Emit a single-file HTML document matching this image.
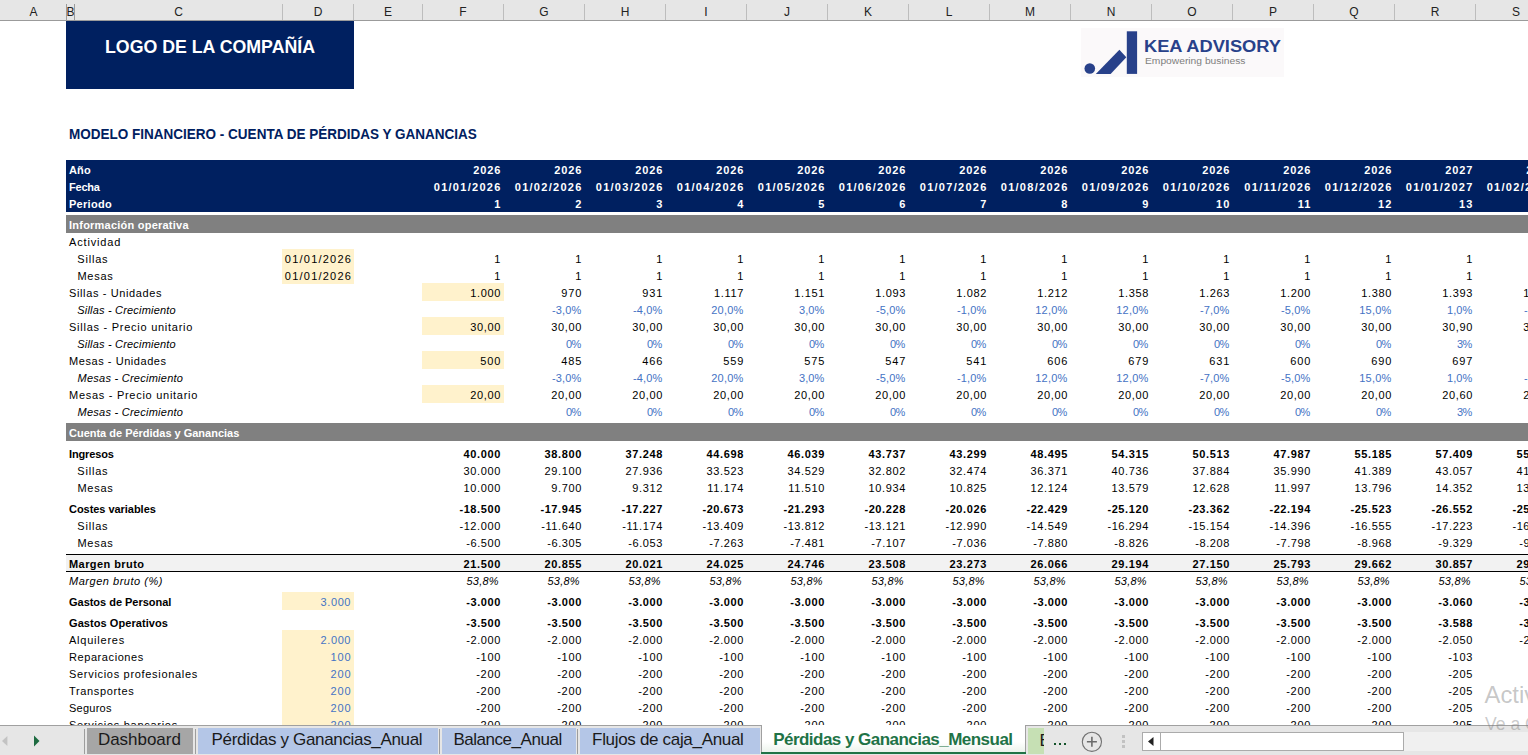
<!DOCTYPE html>
<html><head><meta charset="utf-8"><title>Modelo Financiero</title>
<style>
html,body{margin:0;padding:0;}
body{width:1528px;height:755px;overflow:hidden;background:#fff;position:relative;font-family:"Liberation Sans",sans-serif;}
.t{position:absolute;white-space:nowrap;}
.r{position:absolute;}
.ch{text-align:center;font-size:12px;line-height:18px;color:#222;}
#sheet{position:absolute;left:0;top:0;width:1528px;height:725px;overflow:hidden;}
</style></head><body>
<div id="sheet">
<div class="r" style="left:66px;top:21px;width:288px;height:68px;background:#002060;"></div>
<div class="t" style="top:21px;line-height:52px;font-size:18px;color:#fff;font-weight:bold;left:105.2px;transform:scaleX(0.986);transform-origin:0 0;">LOGO DE LA COMPAÑÍA</div>
<div class="t" style="top:121px;line-height:26px;font-size:14px;color:#002060;font-weight:bold;left:69px;transform:scaleX(0.965);transform-origin:0 0;">MODELO FINANCIERO - CUENTA DE PÉRDIDAS Y GANANCIAS</div>
<div class="r" style="left:66px;top:160px;width:1462px;height:52px;background:#002060;"></div>
<div class="r" style="left:66px;top:215px;width:1462px;height:18px;background:#808080;"></div>
<div class="r" style="left:66px;top:423px;width:1462px;height:18px;background:#808080;"></div>
<div class="t" style="top:162px;line-height:17px;font-size:11px;color:#fff;font-weight:bold;letter-spacing:0.11px;left:69px;">Año</div>
<div class="t" style="top:162px;line-height:17px;font-size:11px;color:#fff;font-weight:bold;letter-spacing:0.84px;right:1026.86px;">2026</div>
<div class="t" style="top:162px;line-height:17px;font-size:11px;color:#fff;font-weight:bold;letter-spacing:0.84px;right:945.86px;">2026</div>
<div class="t" style="top:162px;line-height:17px;font-size:11px;color:#fff;font-weight:bold;letter-spacing:0.84px;right:864.86px;">2026</div>
<div class="t" style="top:162px;line-height:17px;font-size:11px;color:#fff;font-weight:bold;letter-spacing:0.84px;right:783.86px;">2026</div>
<div class="t" style="top:162px;line-height:17px;font-size:11px;color:#fff;font-weight:bold;letter-spacing:0.84px;right:702.86px;">2026</div>
<div class="t" style="top:162px;line-height:17px;font-size:11px;color:#fff;font-weight:bold;letter-spacing:0.84px;right:621.86px;">2026</div>
<div class="t" style="top:162px;line-height:17px;font-size:11px;color:#fff;font-weight:bold;letter-spacing:0.84px;right:540.86px;">2026</div>
<div class="t" style="top:162px;line-height:17px;font-size:11px;color:#fff;font-weight:bold;letter-spacing:0.84px;right:459.86px;">2026</div>
<div class="t" style="top:162px;line-height:17px;font-size:11px;color:#fff;font-weight:bold;letter-spacing:0.84px;right:378.86px;">2026</div>
<div class="t" style="top:162px;line-height:17px;font-size:11px;color:#fff;font-weight:bold;letter-spacing:0.84px;right:297.86px;">2026</div>
<div class="t" style="top:162px;line-height:17px;font-size:11px;color:#fff;font-weight:bold;letter-spacing:0.84px;right:216.86px;">2026</div>
<div class="t" style="top:162px;line-height:17px;font-size:11px;color:#fff;font-weight:bold;letter-spacing:0.84px;right:135.86px;">2026</div>
<div class="t" style="top:162px;line-height:17px;font-size:11px;color:#fff;font-weight:bold;letter-spacing:0.84px;right:54.86px;">2027</div>
<div class="t" style="top:162px;line-height:17px;font-size:11px;color:#fff;font-weight:bold;letter-spacing:0.84px;right:-26.14px;">2027</div>
<div class="t" style="top:179px;line-height:17px;font-size:11px;color:#fff;font-weight:bold;letter-spacing:-0.22px;left:69px;">Fecha</div>
<div class="t" style="top:179px;line-height:17px;font-size:11px;color:#fff;font-weight:bold;letter-spacing:1.28px;right:1026.42px;">01/01/2026</div>
<div class="t" style="top:179px;line-height:17px;font-size:11px;color:#fff;font-weight:bold;letter-spacing:1.28px;right:945.42px;">01/02/2026</div>
<div class="t" style="top:179px;line-height:17px;font-size:11px;color:#fff;font-weight:bold;letter-spacing:1.28px;right:864.42px;">01/03/2026</div>
<div class="t" style="top:179px;line-height:17px;font-size:11px;color:#fff;font-weight:bold;letter-spacing:1.28px;right:783.42px;">01/04/2026</div>
<div class="t" style="top:179px;line-height:17px;font-size:11px;color:#fff;font-weight:bold;letter-spacing:1.28px;right:702.42px;">01/05/2026</div>
<div class="t" style="top:179px;line-height:17px;font-size:11px;color:#fff;font-weight:bold;letter-spacing:1.28px;right:621.42px;">01/06/2026</div>
<div class="t" style="top:179px;line-height:17px;font-size:11px;color:#fff;font-weight:bold;letter-spacing:1.28px;right:540.42px;">01/07/2026</div>
<div class="t" style="top:179px;line-height:17px;font-size:11px;color:#fff;font-weight:bold;letter-spacing:1.28px;right:459.42px;">01/08/2026</div>
<div class="t" style="top:179px;line-height:17px;font-size:11px;color:#fff;font-weight:bold;letter-spacing:1.28px;right:378.42px;">01/09/2026</div>
<div class="t" style="top:179px;line-height:17px;font-size:11px;color:#fff;font-weight:bold;letter-spacing:1.28px;right:297.42px;">01/10/2026</div>
<div class="t" style="top:179px;line-height:17px;font-size:11px;color:#fff;font-weight:bold;letter-spacing:1.28px;right:216.42px;">01/11/2026</div>
<div class="t" style="top:179px;line-height:17px;font-size:11px;color:#fff;font-weight:bold;letter-spacing:1.28px;right:135.42px;">01/12/2026</div>
<div class="t" style="top:179px;line-height:17px;font-size:11px;color:#fff;font-weight:bold;letter-spacing:1.28px;right:54.42px;">01/01/2027</div>
<div class="t" style="top:179px;line-height:17px;font-size:11px;color:#fff;font-weight:bold;letter-spacing:1.28px;right:-26.58px;">01/02/2027</div>
<div class="t" style="top:196px;line-height:17px;font-size:11px;color:#fff;font-weight:bold;letter-spacing:0.28px;left:69px;">Periodo</div>
<div class="t" style="top:196px;line-height:17px;font-size:11px;color:#fff;font-weight:bold;right:1027.70px;">1</div>
<div class="t" style="top:196px;line-height:17px;font-size:11px;color:#fff;font-weight:bold;right:946.70px;">2</div>
<div class="t" style="top:196px;line-height:17px;font-size:11px;color:#fff;font-weight:bold;right:865.70px;">3</div>
<div class="t" style="top:196px;line-height:17px;font-size:11px;color:#fff;font-weight:bold;right:784.70px;">4</div>
<div class="t" style="top:196px;line-height:17px;font-size:11px;color:#fff;font-weight:bold;right:703.70px;">5</div>
<div class="t" style="top:196px;line-height:17px;font-size:11px;color:#fff;font-weight:bold;right:622.70px;">6</div>
<div class="t" style="top:196px;line-height:17px;font-size:11px;color:#fff;font-weight:bold;right:541.70px;">7</div>
<div class="t" style="top:196px;line-height:17px;font-size:11px;color:#fff;font-weight:bold;right:460.70px;">8</div>
<div class="t" style="top:196px;line-height:17px;font-size:11px;color:#fff;font-weight:bold;right:379.70px;">9</div>
<div class="t" style="top:196px;line-height:17px;font-size:11px;color:#fff;font-weight:bold;letter-spacing:0.96px;right:297.74px;">10</div>
<div class="t" style="top:196px;line-height:17px;font-size:11px;color:#fff;font-weight:bold;letter-spacing:0.96px;right:216.74px;">11</div>
<div class="t" style="top:196px;line-height:17px;font-size:11px;color:#fff;font-weight:bold;letter-spacing:0.96px;right:135.74px;">12</div>
<div class="t" style="top:196px;line-height:17px;font-size:11px;color:#fff;font-weight:bold;letter-spacing:0.96px;right:54.74px;">13</div>
<div class="t" style="top:196px;line-height:17px;font-size:11px;color:#fff;font-weight:bold;letter-spacing:0.96px;right:-26.26px;">14</div>
<div class="t" style="top:216.5px;line-height:17px;font-size:11px;color:#fff;font-weight:bold;letter-spacing:0.23px;left:69px;">Información operativa</div>
<div class="t" style="top:424.5px;line-height:17px;font-size:11px;color:#fff;font-weight:bold;letter-spacing:-0.01px;left:69px;">Cuenta de Pérdidas y Ganancias</div>
<div class="r" style="left:282px;top:249px;width:72px;height:35px;background:#FFF2CC;"></div>
<div class="r" style="left:422px;top:283px;width:82px;height:18px;background:#FFF2CC;"></div>
<div class="r" style="left:422px;top:317px;width:82px;height:18px;background:#FFF2CC;"></div>
<div class="r" style="left:422px;top:351px;width:82px;height:18px;background:#FFF2CC;"></div>
<div class="r" style="left:422px;top:385px;width:82px;height:18px;background:#FFF2CC;"></div>
<div class="r" style="left:282px;top:592px;width:72px;height:18px;background:#FFF2CC;"></div>
<div class="r" style="left:282px;top:630px;width:72px;height:100px;background:#FFF2CC;"></div>
<div class="t" style="top:234px;line-height:17px;font-size:11px;color:#000;letter-spacing:0.83px;left:69px;">Actividad</div>
<div class="t" style="top:251px;line-height:17px;font-size:11px;color:#000;letter-spacing:0.80px;left:77.3px;">Sillas</div>
<div class="t" style="top:251px;line-height:17px;font-size:11px;color:#000;right:1027.70px;">1</div>
<div class="t" style="top:251px;line-height:17px;font-size:11px;color:#000;right:946.70px;">1</div>
<div class="t" style="top:251px;line-height:17px;font-size:11px;color:#000;right:865.70px;">1</div>
<div class="t" style="top:251px;line-height:17px;font-size:11px;color:#000;right:784.70px;">1</div>
<div class="t" style="top:251px;line-height:17px;font-size:11px;color:#000;right:703.70px;">1</div>
<div class="t" style="top:251px;line-height:17px;font-size:11px;color:#000;right:622.70px;">1</div>
<div class="t" style="top:251px;line-height:17px;font-size:11px;color:#000;right:541.70px;">1</div>
<div class="t" style="top:251px;line-height:17px;font-size:11px;color:#000;right:460.70px;">1</div>
<div class="t" style="top:251px;line-height:17px;font-size:11px;color:#000;right:379.70px;">1</div>
<div class="t" style="top:251px;line-height:17px;font-size:11px;color:#000;right:298.70px;">1</div>
<div class="t" style="top:251px;line-height:17px;font-size:11px;color:#000;right:217.70px;">1</div>
<div class="t" style="top:251px;line-height:17px;font-size:11px;color:#000;right:136.70px;">1</div>
<div class="t" style="top:251px;line-height:17px;font-size:11px;color:#000;right:55.70px;">1</div>
<div class="t" style="top:251px;line-height:17px;font-size:11px;color:#000;right:-25.30px;">1</div>
<div class="t" style="top:268px;line-height:17px;font-size:11px;color:#000;letter-spacing:0.70px;left:77.5px;">Mesas</div>
<div class="t" style="top:268px;line-height:17px;font-size:11px;color:#000;right:1027.70px;">1</div>
<div class="t" style="top:268px;line-height:17px;font-size:11px;color:#000;right:946.70px;">1</div>
<div class="t" style="top:268px;line-height:17px;font-size:11px;color:#000;right:865.70px;">1</div>
<div class="t" style="top:268px;line-height:17px;font-size:11px;color:#000;right:784.70px;">1</div>
<div class="t" style="top:268px;line-height:17px;font-size:11px;color:#000;right:703.70px;">1</div>
<div class="t" style="top:268px;line-height:17px;font-size:11px;color:#000;right:622.70px;">1</div>
<div class="t" style="top:268px;line-height:17px;font-size:11px;color:#000;right:541.70px;">1</div>
<div class="t" style="top:268px;line-height:17px;font-size:11px;color:#000;right:460.70px;">1</div>
<div class="t" style="top:268px;line-height:17px;font-size:11px;color:#000;right:379.70px;">1</div>
<div class="t" style="top:268px;line-height:17px;font-size:11px;color:#000;right:298.70px;">1</div>
<div class="t" style="top:268px;line-height:17px;font-size:11px;color:#000;right:217.70px;">1</div>
<div class="t" style="top:268px;line-height:17px;font-size:11px;color:#000;right:136.70px;">1</div>
<div class="t" style="top:268px;line-height:17px;font-size:11px;color:#000;right:55.70px;">1</div>
<div class="t" style="top:268px;line-height:17px;font-size:11px;color:#000;right:-25.30px;">1</div>
<div class="t" style="top:251px;line-height:17px;font-size:11px;color:#000;letter-spacing:1.22px;right:1175.88px;">01/01/2026</div>
<div class="t" style="top:268px;line-height:17px;font-size:11px;color:#000;letter-spacing:1.22px;right:1175.88px;">01/01/2026</div>
<div class="t" style="top:285px;line-height:17px;font-size:11px;color:#000;letter-spacing:0.62px;left:69px;">Sillas - Unidades</div>
<div class="t" style="top:285px;line-height:17px;font-size:11px;color:#000;letter-spacing:0.62px;right:1027.08px;">1.000</div>
<div class="t" style="top:285px;line-height:17px;font-size:11px;color:#000;letter-spacing:0.87px;right:945.83px;">970</div>
<div class="t" style="top:285px;line-height:17px;font-size:11px;color:#000;letter-spacing:0.87px;right:864.83px;">931</div>
<div class="t" style="top:285px;line-height:17px;font-size:11px;color:#000;letter-spacing:0.62px;right:784.08px;">1.117</div>
<div class="t" style="top:285px;line-height:17px;font-size:11px;color:#000;letter-spacing:0.62px;right:703.08px;">1.151</div>
<div class="t" style="top:285px;line-height:17px;font-size:11px;color:#000;letter-spacing:0.62px;right:622.08px;">1.093</div>
<div class="t" style="top:285px;line-height:17px;font-size:11px;color:#000;letter-spacing:0.62px;right:541.08px;">1.082</div>
<div class="t" style="top:285px;line-height:17px;font-size:11px;color:#000;letter-spacing:0.62px;right:460.08px;">1.212</div>
<div class="t" style="top:285px;line-height:17px;font-size:11px;color:#000;letter-spacing:0.62px;right:379.08px;">1.358</div>
<div class="t" style="top:285px;line-height:17px;font-size:11px;color:#000;letter-spacing:0.62px;right:298.08px;">1.263</div>
<div class="t" style="top:285px;line-height:17px;font-size:11px;color:#000;letter-spacing:0.62px;right:217.08px;">1.200</div>
<div class="t" style="top:285px;line-height:17px;font-size:11px;color:#000;letter-spacing:0.62px;right:136.08px;">1.380</div>
<div class="t" style="top:285px;line-height:17px;font-size:11px;color:#000;letter-spacing:0.62px;right:55.08px;">1.393</div>
<div class="t" style="top:285px;line-height:17px;font-size:11px;color:#000;letter-spacing:0.62px;right:-25.92px;">1.351</div>
<div class="t" style="top:302px;line-height:17px;font-size:11px;color:#000;font-style:italic;letter-spacing:0.19px;left:77.3px;">Sillas - Crecimiento</div>
<div class="t" style="top:302px;line-height:17px;font-size:11px;color:#4472C4;letter-spacing:0.12px;right:946.58px;">-3,0%</div>
<div class="t" style="top:302px;line-height:17px;font-size:11px;color:#4472C4;letter-spacing:0.12px;right:865.58px;">-4,0%</div>
<div class="t" style="top:302px;line-height:17px;font-size:11px;color:#4472C4;letter-spacing:0.23px;right:784.47px;">20,0%</div>
<div class="t" style="top:302px;line-height:17px;font-size:11px;color:#4472C4;letter-spacing:0.04px;right:703.66px;">3,0%</div>
<div class="t" style="top:302px;line-height:17px;font-size:11px;color:#4472C4;letter-spacing:0.12px;right:622.58px;">-5,0%</div>
<div class="t" style="top:302px;line-height:17px;font-size:11px;color:#4472C4;letter-spacing:0.12px;right:541.58px;">-1,0%</div>
<div class="t" style="top:302px;line-height:17px;font-size:11px;color:#4472C4;letter-spacing:0.23px;right:460.47px;">12,0%</div>
<div class="t" style="top:302px;line-height:17px;font-size:11px;color:#4472C4;letter-spacing:0.23px;right:379.47px;">12,0%</div>
<div class="t" style="top:302px;line-height:17px;font-size:11px;color:#4472C4;letter-spacing:0.12px;right:298.58px;">-7,0%</div>
<div class="t" style="top:302px;line-height:17px;font-size:11px;color:#4472C4;letter-spacing:0.12px;right:217.58px;">-5,0%</div>
<div class="t" style="top:302px;line-height:17px;font-size:11px;color:#4472C4;letter-spacing:0.23px;right:136.47px;">15,0%</div>
<div class="t" style="top:302px;line-height:17px;font-size:11px;color:#4472C4;letter-spacing:0.04px;right:55.66px;">1,0%</div>
<div class="t" style="top:302px;line-height:17px;font-size:11px;color:#4472C4;letter-spacing:0.12px;right:-25.42px;">-3,0%</div>
<div class="t" style="top:319px;line-height:17px;font-size:11px;color:#000;letter-spacing:0.74px;left:69px;">Sillas - Precio unitario</div>
<div class="t" style="top:319px;line-height:17px;font-size:11px;color:#000;letter-spacing:0.62px;right:1027.08px;">30,00</div>
<div class="t" style="top:319px;line-height:17px;font-size:11px;color:#000;letter-spacing:0.62px;right:946.08px;">30,00</div>
<div class="t" style="top:319px;line-height:17px;font-size:11px;color:#000;letter-spacing:0.62px;right:865.08px;">30,00</div>
<div class="t" style="top:319px;line-height:17px;font-size:11px;color:#000;letter-spacing:0.62px;right:784.08px;">30,00</div>
<div class="t" style="top:319px;line-height:17px;font-size:11px;color:#000;letter-spacing:0.62px;right:703.08px;">30,00</div>
<div class="t" style="top:319px;line-height:17px;font-size:11px;color:#000;letter-spacing:0.62px;right:622.08px;">30,00</div>
<div class="t" style="top:319px;line-height:17px;font-size:11px;color:#000;letter-spacing:0.62px;right:541.08px;">30,00</div>
<div class="t" style="top:319px;line-height:17px;font-size:11px;color:#000;letter-spacing:0.62px;right:460.08px;">30,00</div>
<div class="t" style="top:319px;line-height:17px;font-size:11px;color:#000;letter-spacing:0.62px;right:379.08px;">30,00</div>
<div class="t" style="top:319px;line-height:17px;font-size:11px;color:#000;letter-spacing:0.62px;right:298.08px;">30,00</div>
<div class="t" style="top:319px;line-height:17px;font-size:11px;color:#000;letter-spacing:0.62px;right:217.08px;">30,00</div>
<div class="t" style="top:319px;line-height:17px;font-size:11px;color:#000;letter-spacing:0.62px;right:136.08px;">30,00</div>
<div class="t" style="top:319px;line-height:17px;font-size:11px;color:#000;letter-spacing:0.62px;right:55.08px;">30,90</div>
<div class="t" style="top:319px;line-height:17px;font-size:11px;color:#000;letter-spacing:0.62px;right:-25.92px;">30,90</div>
<div class="t" style="top:336px;line-height:17px;font-size:11px;color:#000;font-style:italic;letter-spacing:0.19px;left:77.3px;">Sillas - Crecimiento</div>
<div class="t" style="top:336px;line-height:17px;font-size:11px;color:#4472C4;letter-spacing:-0.60px;right:947.30px;">0%</div>
<div class="t" style="top:336px;line-height:17px;font-size:11px;color:#4472C4;letter-spacing:-0.60px;right:866.30px;">0%</div>
<div class="t" style="top:336px;line-height:17px;font-size:11px;color:#4472C4;letter-spacing:-0.60px;right:785.30px;">0%</div>
<div class="t" style="top:336px;line-height:17px;font-size:11px;color:#4472C4;letter-spacing:-0.60px;right:704.30px;">0%</div>
<div class="t" style="top:336px;line-height:17px;font-size:11px;color:#4472C4;letter-spacing:-0.60px;right:623.30px;">0%</div>
<div class="t" style="top:336px;line-height:17px;font-size:11px;color:#4472C4;letter-spacing:-0.60px;right:542.30px;">0%</div>
<div class="t" style="top:336px;line-height:17px;font-size:11px;color:#4472C4;letter-spacing:-0.60px;right:461.30px;">0%</div>
<div class="t" style="top:336px;line-height:17px;font-size:11px;color:#4472C4;letter-spacing:-0.60px;right:380.30px;">0%</div>
<div class="t" style="top:336px;line-height:17px;font-size:11px;color:#4472C4;letter-spacing:-0.60px;right:299.30px;">0%</div>
<div class="t" style="top:336px;line-height:17px;font-size:11px;color:#4472C4;letter-spacing:-0.60px;right:218.30px;">0%</div>
<div class="t" style="top:336px;line-height:17px;font-size:11px;color:#4472C4;letter-spacing:-0.60px;right:137.30px;">0%</div>
<div class="t" style="top:336px;line-height:17px;font-size:11px;color:#4472C4;letter-spacing:-0.60px;right:56.30px;">3%</div>
<div class="t" style="top:336px;line-height:17px;font-size:11px;color:#4472C4;letter-spacing:-0.60px;right:-24.70px;">0%</div>
<div class="t" style="top:353px;line-height:17px;font-size:11px;color:#000;letter-spacing:0.56px;left:69px;">Mesas - Unidades</div>
<div class="t" style="top:353px;line-height:17px;font-size:11px;color:#000;letter-spacing:0.87px;right:1026.83px;">500</div>
<div class="t" style="top:353px;line-height:17px;font-size:11px;color:#000;letter-spacing:0.87px;right:945.83px;">485</div>
<div class="t" style="top:353px;line-height:17px;font-size:11px;color:#000;letter-spacing:0.87px;right:864.83px;">466</div>
<div class="t" style="top:353px;line-height:17px;font-size:11px;color:#000;letter-spacing:0.87px;right:783.83px;">559</div>
<div class="t" style="top:353px;line-height:17px;font-size:11px;color:#000;letter-spacing:0.87px;right:702.83px;">575</div>
<div class="t" style="top:353px;line-height:17px;font-size:11px;color:#000;letter-spacing:0.87px;right:621.83px;">547</div>
<div class="t" style="top:353px;line-height:17px;font-size:11px;color:#000;letter-spacing:0.87px;right:540.83px;">541</div>
<div class="t" style="top:353px;line-height:17px;font-size:11px;color:#000;letter-spacing:0.87px;right:459.83px;">606</div>
<div class="t" style="top:353px;line-height:17px;font-size:11px;color:#000;letter-spacing:0.87px;right:378.83px;">679</div>
<div class="t" style="top:353px;line-height:17px;font-size:11px;color:#000;letter-spacing:0.87px;right:297.83px;">631</div>
<div class="t" style="top:353px;line-height:17px;font-size:11px;color:#000;letter-spacing:0.87px;right:216.83px;">600</div>
<div class="t" style="top:353px;line-height:17px;font-size:11px;color:#000;letter-spacing:0.87px;right:135.83px;">690</div>
<div class="t" style="top:353px;line-height:17px;font-size:11px;color:#000;letter-spacing:0.87px;right:54.83px;">697</div>
<div class="t" style="top:353px;line-height:17px;font-size:11px;color:#000;letter-spacing:0.87px;right:-26.17px;">676</div>
<div class="t" style="top:370px;line-height:17px;font-size:11px;color:#000;font-style:italic;letter-spacing:0.25px;left:77.6px;">Mesas - Crecimiento</div>
<div class="t" style="top:370px;line-height:17px;font-size:11px;color:#4472C4;letter-spacing:0.12px;right:946.58px;">-3,0%</div>
<div class="t" style="top:370px;line-height:17px;font-size:11px;color:#4472C4;letter-spacing:0.12px;right:865.58px;">-4,0%</div>
<div class="t" style="top:370px;line-height:17px;font-size:11px;color:#4472C4;letter-spacing:0.23px;right:784.47px;">20,0%</div>
<div class="t" style="top:370px;line-height:17px;font-size:11px;color:#4472C4;letter-spacing:0.04px;right:703.66px;">3,0%</div>
<div class="t" style="top:370px;line-height:17px;font-size:11px;color:#4472C4;letter-spacing:0.12px;right:622.58px;">-5,0%</div>
<div class="t" style="top:370px;line-height:17px;font-size:11px;color:#4472C4;letter-spacing:0.12px;right:541.58px;">-1,0%</div>
<div class="t" style="top:370px;line-height:17px;font-size:11px;color:#4472C4;letter-spacing:0.23px;right:460.47px;">12,0%</div>
<div class="t" style="top:370px;line-height:17px;font-size:11px;color:#4472C4;letter-spacing:0.23px;right:379.47px;">12,0%</div>
<div class="t" style="top:370px;line-height:17px;font-size:11px;color:#4472C4;letter-spacing:0.12px;right:298.58px;">-7,0%</div>
<div class="t" style="top:370px;line-height:17px;font-size:11px;color:#4472C4;letter-spacing:0.12px;right:217.58px;">-5,0%</div>
<div class="t" style="top:370px;line-height:17px;font-size:11px;color:#4472C4;letter-spacing:0.23px;right:136.47px;">15,0%</div>
<div class="t" style="top:370px;line-height:17px;font-size:11px;color:#4472C4;letter-spacing:0.04px;right:55.66px;">1,0%</div>
<div class="t" style="top:370px;line-height:17px;font-size:11px;color:#4472C4;letter-spacing:0.12px;right:-25.42px;">-3,0%</div>
<div class="t" style="top:387px;line-height:17px;font-size:11px;color:#000;letter-spacing:0.72px;left:69px;">Mesas - Precio unitario</div>
<div class="t" style="top:387px;line-height:17px;font-size:11px;color:#000;letter-spacing:0.62px;right:1027.08px;">20,00</div>
<div class="t" style="top:387px;line-height:17px;font-size:11px;color:#000;letter-spacing:0.62px;right:946.08px;">20,00</div>
<div class="t" style="top:387px;line-height:17px;font-size:11px;color:#000;letter-spacing:0.62px;right:865.08px;">20,00</div>
<div class="t" style="top:387px;line-height:17px;font-size:11px;color:#000;letter-spacing:0.62px;right:784.08px;">20,00</div>
<div class="t" style="top:387px;line-height:17px;font-size:11px;color:#000;letter-spacing:0.62px;right:703.08px;">20,00</div>
<div class="t" style="top:387px;line-height:17px;font-size:11px;color:#000;letter-spacing:0.62px;right:622.08px;">20,00</div>
<div class="t" style="top:387px;line-height:17px;font-size:11px;color:#000;letter-spacing:0.62px;right:541.08px;">20,00</div>
<div class="t" style="top:387px;line-height:17px;font-size:11px;color:#000;letter-spacing:0.62px;right:460.08px;">20,00</div>
<div class="t" style="top:387px;line-height:17px;font-size:11px;color:#000;letter-spacing:0.62px;right:379.08px;">20,00</div>
<div class="t" style="top:387px;line-height:17px;font-size:11px;color:#000;letter-spacing:0.62px;right:298.08px;">20,00</div>
<div class="t" style="top:387px;line-height:17px;font-size:11px;color:#000;letter-spacing:0.62px;right:217.08px;">20,00</div>
<div class="t" style="top:387px;line-height:17px;font-size:11px;color:#000;letter-spacing:0.62px;right:136.08px;">20,00</div>
<div class="t" style="top:387px;line-height:17px;font-size:11px;color:#000;letter-spacing:0.62px;right:55.08px;">20,60</div>
<div class="t" style="top:387px;line-height:17px;font-size:11px;color:#000;letter-spacing:0.62px;right:-25.92px;">20,60</div>
<div class="t" style="top:404px;line-height:17px;font-size:11px;color:#000;font-style:italic;letter-spacing:0.25px;left:77.6px;">Mesas - Crecimiento</div>
<div class="t" style="top:404px;line-height:17px;font-size:11px;color:#4472C4;letter-spacing:-0.60px;right:947.30px;">0%</div>
<div class="t" style="top:404px;line-height:17px;font-size:11px;color:#4472C4;letter-spacing:-0.60px;right:866.30px;">0%</div>
<div class="t" style="top:404px;line-height:17px;font-size:11px;color:#4472C4;letter-spacing:-0.60px;right:785.30px;">0%</div>
<div class="t" style="top:404px;line-height:17px;font-size:11px;color:#4472C4;letter-spacing:-0.60px;right:704.30px;">0%</div>
<div class="t" style="top:404px;line-height:17px;font-size:11px;color:#4472C4;letter-spacing:-0.60px;right:623.30px;">0%</div>
<div class="t" style="top:404px;line-height:17px;font-size:11px;color:#4472C4;letter-spacing:-0.60px;right:542.30px;">0%</div>
<div class="t" style="top:404px;line-height:17px;font-size:11px;color:#4472C4;letter-spacing:-0.60px;right:461.30px;">0%</div>
<div class="t" style="top:404px;line-height:17px;font-size:11px;color:#4472C4;letter-spacing:-0.60px;right:380.30px;">0%</div>
<div class="t" style="top:404px;line-height:17px;font-size:11px;color:#4472C4;letter-spacing:-0.60px;right:299.30px;">0%</div>
<div class="t" style="top:404px;line-height:17px;font-size:11px;color:#4472C4;letter-spacing:-0.60px;right:218.30px;">0%</div>
<div class="t" style="top:404px;line-height:17px;font-size:11px;color:#4472C4;letter-spacing:-0.60px;right:137.30px;">0%</div>
<div class="t" style="top:404px;line-height:17px;font-size:11px;color:#4472C4;letter-spacing:-0.60px;right:56.30px;">3%</div>
<div class="t" style="top:404px;line-height:17px;font-size:11px;color:#4472C4;letter-spacing:-0.60px;right:-24.70px;">0%</div>
<div class="t" style="top:446px;line-height:17px;font-size:11px;color:#000;font-weight:bold;letter-spacing:-0.14px;left:69px;">Ingresos</div>
<div class="t" style="top:446px;line-height:17px;font-size:11px;color:#000;font-weight:bold;letter-spacing:0.65px;right:1027.05px;">40.000</div>
<div class="t" style="top:446px;line-height:17px;font-size:11px;color:#000;font-weight:bold;letter-spacing:0.65px;right:946.05px;">38.800</div>
<div class="t" style="top:446px;line-height:17px;font-size:11px;color:#000;font-weight:bold;letter-spacing:0.65px;right:865.05px;">37.248</div>
<div class="t" style="top:446px;line-height:17px;font-size:11px;color:#000;font-weight:bold;letter-spacing:0.65px;right:784.05px;">44.698</div>
<div class="t" style="top:446px;line-height:17px;font-size:11px;color:#000;font-weight:bold;letter-spacing:0.65px;right:703.05px;">46.039</div>
<div class="t" style="top:446px;line-height:17px;font-size:11px;color:#000;font-weight:bold;letter-spacing:0.65px;right:622.05px;">43.737</div>
<div class="t" style="top:446px;line-height:17px;font-size:11px;color:#000;font-weight:bold;letter-spacing:0.65px;right:541.05px;">43.299</div>
<div class="t" style="top:446px;line-height:17px;font-size:11px;color:#000;font-weight:bold;letter-spacing:0.65px;right:460.05px;">48.495</div>
<div class="t" style="top:446px;line-height:17px;font-size:11px;color:#000;font-weight:bold;letter-spacing:0.65px;right:379.05px;">54.315</div>
<div class="t" style="top:446px;line-height:17px;font-size:11px;color:#000;font-weight:bold;letter-spacing:0.65px;right:298.05px;">50.513</div>
<div class="t" style="top:446px;line-height:17px;font-size:11px;color:#000;font-weight:bold;letter-spacing:0.65px;right:217.05px;">47.987</div>
<div class="t" style="top:446px;line-height:17px;font-size:11px;color:#000;font-weight:bold;letter-spacing:0.65px;right:136.05px;">55.185</div>
<div class="t" style="top:446px;line-height:17px;font-size:11px;color:#000;font-weight:bold;letter-spacing:0.65px;right:55.05px;">57.409</div>
<div class="t" style="top:446px;line-height:17px;font-size:11px;color:#000;font-weight:bold;letter-spacing:0.65px;right:-25.95px;">55.672</div>
<div class="t" style="top:463px;line-height:17px;font-size:11px;color:#000;letter-spacing:0.80px;left:77.3px;">Sillas</div>
<div class="t" style="top:463px;line-height:17px;font-size:11px;color:#000;letter-spacing:0.65px;right:1027.05px;">30.000</div>
<div class="t" style="top:463px;line-height:17px;font-size:11px;color:#000;letter-spacing:0.65px;right:946.05px;">29.100</div>
<div class="t" style="top:463px;line-height:17px;font-size:11px;color:#000;letter-spacing:0.65px;right:865.05px;">27.936</div>
<div class="t" style="top:463px;line-height:17px;font-size:11px;color:#000;letter-spacing:0.65px;right:784.05px;">33.523</div>
<div class="t" style="top:463px;line-height:17px;font-size:11px;color:#000;letter-spacing:0.65px;right:703.05px;">34.529</div>
<div class="t" style="top:463px;line-height:17px;font-size:11px;color:#000;letter-spacing:0.65px;right:622.05px;">32.802</div>
<div class="t" style="top:463px;line-height:17px;font-size:11px;color:#000;letter-spacing:0.65px;right:541.05px;">32.474</div>
<div class="t" style="top:463px;line-height:17px;font-size:11px;color:#000;letter-spacing:0.65px;right:460.05px;">36.371</div>
<div class="t" style="top:463px;line-height:17px;font-size:11px;color:#000;letter-spacing:0.65px;right:379.05px;">40.736</div>
<div class="t" style="top:463px;line-height:17px;font-size:11px;color:#000;letter-spacing:0.65px;right:298.05px;">37.884</div>
<div class="t" style="top:463px;line-height:17px;font-size:11px;color:#000;letter-spacing:0.65px;right:217.05px;">35.990</div>
<div class="t" style="top:463px;line-height:17px;font-size:11px;color:#000;letter-spacing:0.65px;right:136.05px;">41.389</div>
<div class="t" style="top:463px;line-height:17px;font-size:11px;color:#000;letter-spacing:0.65px;right:55.05px;">43.057</div>
<div class="t" style="top:463px;line-height:17px;font-size:11px;color:#000;letter-spacing:0.65px;right:-25.95px;">41.746</div>
<div class="t" style="top:480px;line-height:17px;font-size:11px;color:#000;letter-spacing:0.70px;left:77.5px;">Mesas</div>
<div class="t" style="top:480px;line-height:17px;font-size:11px;color:#000;letter-spacing:0.65px;right:1027.05px;">10.000</div>
<div class="t" style="top:480px;line-height:17px;font-size:11px;color:#000;letter-spacing:0.62px;right:946.08px;">9.700</div>
<div class="t" style="top:480px;line-height:17px;font-size:11px;color:#000;letter-spacing:0.62px;right:865.08px;">9.312</div>
<div class="t" style="top:480px;line-height:17px;font-size:11px;color:#000;letter-spacing:0.65px;right:784.05px;">11.174</div>
<div class="t" style="top:480px;line-height:17px;font-size:11px;color:#000;letter-spacing:0.65px;right:703.05px;">11.510</div>
<div class="t" style="top:480px;line-height:17px;font-size:11px;color:#000;letter-spacing:0.65px;right:622.05px;">10.934</div>
<div class="t" style="top:480px;line-height:17px;font-size:11px;color:#000;letter-spacing:0.65px;right:541.05px;">10.825</div>
<div class="t" style="top:480px;line-height:17px;font-size:11px;color:#000;letter-spacing:0.65px;right:460.05px;">12.124</div>
<div class="t" style="top:480px;line-height:17px;font-size:11px;color:#000;letter-spacing:0.65px;right:379.05px;">13.579</div>
<div class="t" style="top:480px;line-height:17px;font-size:11px;color:#000;letter-spacing:0.65px;right:298.05px;">12.628</div>
<div class="t" style="top:480px;line-height:17px;font-size:11px;color:#000;letter-spacing:0.65px;right:217.05px;">11.997</div>
<div class="t" style="top:480px;line-height:17px;font-size:11px;color:#000;letter-spacing:0.65px;right:136.05px;">13.796</div>
<div class="t" style="top:480px;line-height:17px;font-size:11px;color:#000;letter-spacing:0.65px;right:55.05px;">14.352</div>
<div class="t" style="top:480px;line-height:17px;font-size:11px;color:#000;letter-spacing:0.65px;right:-25.95px;">13.926</div>
<div class="t" style="top:501px;line-height:17px;font-size:11px;color:#000;font-weight:bold;letter-spacing:-0.04px;left:69px;">Costes variables</div>
<div class="t" style="top:501px;line-height:17px;font-size:11px;color:#000;font-weight:bold;letter-spacing:0.60px;right:1027.10px;">-18.500</div>
<div class="t" style="top:501px;line-height:17px;font-size:11px;color:#000;font-weight:bold;letter-spacing:0.60px;right:946.10px;">-17.945</div>
<div class="t" style="top:501px;line-height:17px;font-size:11px;color:#000;font-weight:bold;letter-spacing:0.60px;right:865.10px;">-17.227</div>
<div class="t" style="top:501px;line-height:17px;font-size:11px;color:#000;font-weight:bold;letter-spacing:0.60px;right:784.10px;">-20.673</div>
<div class="t" style="top:501px;line-height:17px;font-size:11px;color:#000;font-weight:bold;letter-spacing:0.60px;right:703.10px;">-21.293</div>
<div class="t" style="top:501px;line-height:17px;font-size:11px;color:#000;font-weight:bold;letter-spacing:0.60px;right:622.10px;">-20.228</div>
<div class="t" style="top:501px;line-height:17px;font-size:11px;color:#000;font-weight:bold;letter-spacing:0.60px;right:541.10px;">-20.026</div>
<div class="t" style="top:501px;line-height:17px;font-size:11px;color:#000;font-weight:bold;letter-spacing:0.60px;right:460.10px;">-22.429</div>
<div class="t" style="top:501px;line-height:17px;font-size:11px;color:#000;font-weight:bold;letter-spacing:0.60px;right:379.10px;">-25.120</div>
<div class="t" style="top:501px;line-height:17px;font-size:11px;color:#000;font-weight:bold;letter-spacing:0.60px;right:298.10px;">-23.362</div>
<div class="t" style="top:501px;line-height:17px;font-size:11px;color:#000;font-weight:bold;letter-spacing:0.60px;right:217.10px;">-22.194</div>
<div class="t" style="top:501px;line-height:17px;font-size:11px;color:#000;font-weight:bold;letter-spacing:0.60px;right:136.10px;">-25.523</div>
<div class="t" style="top:501px;line-height:17px;font-size:11px;color:#000;font-weight:bold;letter-spacing:0.60px;right:55.10px;">-26.552</div>
<div class="t" style="top:501px;line-height:17px;font-size:11px;color:#000;font-weight:bold;letter-spacing:0.60px;right:-25.90px;">-25.750</div>
<div class="t" style="top:518px;line-height:17px;font-size:11px;color:#000;letter-spacing:0.80px;left:77.3px;">Sillas</div>
<div class="t" style="top:518px;line-height:17px;font-size:11px;color:#000;letter-spacing:0.60px;right:1027.10px;">-12.000</div>
<div class="t" style="top:518px;line-height:17px;font-size:11px;color:#000;letter-spacing:0.60px;right:946.10px;">-11.640</div>
<div class="t" style="top:518px;line-height:17px;font-size:11px;color:#000;letter-spacing:0.60px;right:865.10px;">-11.174</div>
<div class="t" style="top:518px;line-height:17px;font-size:11px;color:#000;letter-spacing:0.60px;right:784.10px;">-13.409</div>
<div class="t" style="top:518px;line-height:17px;font-size:11px;color:#000;letter-spacing:0.60px;right:703.10px;">-13.812</div>
<div class="t" style="top:518px;line-height:17px;font-size:11px;color:#000;letter-spacing:0.60px;right:622.10px;">-13.121</div>
<div class="t" style="top:518px;line-height:17px;font-size:11px;color:#000;letter-spacing:0.60px;right:541.10px;">-12.990</div>
<div class="t" style="top:518px;line-height:17px;font-size:11px;color:#000;letter-spacing:0.60px;right:460.10px;">-14.549</div>
<div class="t" style="top:518px;line-height:17px;font-size:11px;color:#000;letter-spacing:0.60px;right:379.10px;">-16.294</div>
<div class="t" style="top:518px;line-height:17px;font-size:11px;color:#000;letter-spacing:0.60px;right:298.10px;">-15.154</div>
<div class="t" style="top:518px;line-height:17px;font-size:11px;color:#000;letter-spacing:0.60px;right:217.10px;">-14.396</div>
<div class="t" style="top:518px;line-height:17px;font-size:11px;color:#000;letter-spacing:0.60px;right:136.10px;">-16.555</div>
<div class="t" style="top:518px;line-height:17px;font-size:11px;color:#000;letter-spacing:0.60px;right:55.10px;">-17.223</div>
<div class="t" style="top:518px;line-height:17px;font-size:11px;color:#000;letter-spacing:0.60px;right:-25.90px;">-16.698</div>
<div class="t" style="top:535px;line-height:17px;font-size:11px;color:#000;letter-spacing:0.70px;left:77.5px;">Mesas</div>
<div class="t" style="top:535px;line-height:17px;font-size:11px;color:#000;letter-spacing:0.56px;right:1027.14px;">-6.500</div>
<div class="t" style="top:535px;line-height:17px;font-size:11px;color:#000;letter-spacing:0.56px;right:946.14px;">-6.305</div>
<div class="t" style="top:535px;line-height:17px;font-size:11px;color:#000;letter-spacing:0.56px;right:865.14px;">-6.053</div>
<div class="t" style="top:535px;line-height:17px;font-size:11px;color:#000;letter-spacing:0.56px;right:784.14px;">-7.263</div>
<div class="t" style="top:535px;line-height:17px;font-size:11px;color:#000;letter-spacing:0.56px;right:703.14px;">-7.481</div>
<div class="t" style="top:535px;line-height:17px;font-size:11px;color:#000;letter-spacing:0.56px;right:622.14px;">-7.107</div>
<div class="t" style="top:535px;line-height:17px;font-size:11px;color:#000;letter-spacing:0.56px;right:541.14px;">-7.036</div>
<div class="t" style="top:535px;line-height:17px;font-size:11px;color:#000;letter-spacing:0.56px;right:460.14px;">-7.880</div>
<div class="t" style="top:535px;line-height:17px;font-size:11px;color:#000;letter-spacing:0.56px;right:379.14px;">-8.826</div>
<div class="t" style="top:535px;line-height:17px;font-size:11px;color:#000;letter-spacing:0.56px;right:298.14px;">-8.208</div>
<div class="t" style="top:535px;line-height:17px;font-size:11px;color:#000;letter-spacing:0.56px;right:217.14px;">-7.798</div>
<div class="t" style="top:535px;line-height:17px;font-size:11px;color:#000;letter-spacing:0.56px;right:136.14px;">-8.968</div>
<div class="t" style="top:535px;line-height:17px;font-size:11px;color:#000;letter-spacing:0.56px;right:55.14px;">-9.329</div>
<div class="t" style="top:535px;line-height:17px;font-size:11px;color:#000;letter-spacing:0.56px;right:-25.86px;">-9.052</div>
<div class="r" style="left:66px;top:554px;width:1462px;height:18px;background:#F2F2F2;border-top:1px solid #000;border-bottom:1px solid #000;box-sizing:border-box;"></div>
<div class="t" style="top:556px;line-height:17px;font-size:11px;color:#000;font-weight:bold;letter-spacing:0.43px;left:69px;">Margen bruto</div>
<div class="t" style="top:556px;line-height:17px;font-size:11px;color:#000;font-weight:bold;letter-spacing:0.65px;right:1027.05px;">21.500</div>
<div class="t" style="top:556px;line-height:17px;font-size:11px;color:#000;font-weight:bold;letter-spacing:0.65px;right:946.05px;">20.855</div>
<div class="t" style="top:556px;line-height:17px;font-size:11px;color:#000;font-weight:bold;letter-spacing:0.65px;right:865.05px;">20.021</div>
<div class="t" style="top:556px;line-height:17px;font-size:11px;color:#000;font-weight:bold;letter-spacing:0.65px;right:784.05px;">24.025</div>
<div class="t" style="top:556px;line-height:17px;font-size:11px;color:#000;font-weight:bold;letter-spacing:0.65px;right:703.05px;">24.746</div>
<div class="t" style="top:556px;line-height:17px;font-size:11px;color:#000;font-weight:bold;letter-spacing:0.65px;right:622.05px;">23.508</div>
<div class="t" style="top:556px;line-height:17px;font-size:11px;color:#000;font-weight:bold;letter-spacing:0.65px;right:541.05px;">23.273</div>
<div class="t" style="top:556px;line-height:17px;font-size:11px;color:#000;font-weight:bold;letter-spacing:0.65px;right:460.05px;">26.066</div>
<div class="t" style="top:556px;line-height:17px;font-size:11px;color:#000;font-weight:bold;letter-spacing:0.65px;right:379.05px;">29.194</div>
<div class="t" style="top:556px;line-height:17px;font-size:11px;color:#000;font-weight:bold;letter-spacing:0.65px;right:298.05px;">27.150</div>
<div class="t" style="top:556px;line-height:17px;font-size:11px;color:#000;font-weight:bold;letter-spacing:0.65px;right:217.05px;">25.793</div>
<div class="t" style="top:556px;line-height:17px;font-size:11px;color:#000;font-weight:bold;letter-spacing:0.65px;right:136.05px;">29.662</div>
<div class="t" style="top:556px;line-height:17px;font-size:11px;color:#000;font-weight:bold;letter-spacing:0.65px;right:55.05px;">30.857</div>
<div class="t" style="top:556px;line-height:17px;font-size:11px;color:#000;font-weight:bold;letter-spacing:0.65px;right:-25.95px;">29.922</div>
<div class="t" style="top:573px;line-height:17px;font-size:11px;color:#000;font-style:italic;letter-spacing:0.52px;left:69px;">Margen bruto (%)</div>
<div class="t" style="top:573px;line-height:17px;font-size:11px;color:#000;font-style:italic;letter-spacing:0.23px;right:1029.17px;">53,8%</div>
<div class="t" style="top:573px;line-height:17px;font-size:11px;color:#000;font-style:italic;letter-spacing:0.23px;right:948.17px;">53,8%</div>
<div class="t" style="top:573px;line-height:17px;font-size:11px;color:#000;font-style:italic;letter-spacing:0.23px;right:867.17px;">53,8%</div>
<div class="t" style="top:573px;line-height:17px;font-size:11px;color:#000;font-style:italic;letter-spacing:0.23px;right:786.17px;">53,8%</div>
<div class="t" style="top:573px;line-height:17px;font-size:11px;color:#000;font-style:italic;letter-spacing:0.23px;right:705.17px;">53,8%</div>
<div class="t" style="top:573px;line-height:17px;font-size:11px;color:#000;font-style:italic;letter-spacing:0.23px;right:624.17px;">53,8%</div>
<div class="t" style="top:573px;line-height:17px;font-size:11px;color:#000;font-style:italic;letter-spacing:0.23px;right:543.17px;">53,8%</div>
<div class="t" style="top:573px;line-height:17px;font-size:11px;color:#000;font-style:italic;letter-spacing:0.23px;right:462.17px;">53,8%</div>
<div class="t" style="top:573px;line-height:17px;font-size:11px;color:#000;font-style:italic;letter-spacing:0.23px;right:381.17px;">53,8%</div>
<div class="t" style="top:573px;line-height:17px;font-size:11px;color:#000;font-style:italic;letter-spacing:0.23px;right:300.17px;">53,8%</div>
<div class="t" style="top:573px;line-height:17px;font-size:11px;color:#000;font-style:italic;letter-spacing:0.23px;right:219.17px;">53,8%</div>
<div class="t" style="top:573px;line-height:17px;font-size:11px;color:#000;font-style:italic;letter-spacing:0.23px;right:138.17px;">53,8%</div>
<div class="t" style="top:573px;line-height:17px;font-size:11px;color:#000;font-style:italic;letter-spacing:0.23px;right:57.17px;">53,8%</div>
<div class="t" style="top:573px;line-height:17px;font-size:11px;color:#000;font-style:italic;letter-spacing:0.23px;right:-23.83px;">53,8%</div>
<div class="t" style="top:594px;line-height:17px;font-size:11px;color:#000;font-weight:bold;letter-spacing:-0.02px;left:69px;">Gastos de Personal</div>
<div class="t" style="top:594px;line-height:17px;font-size:11px;color:#000;font-weight:bold;letter-spacing:0.56px;right:1027.14px;">-3.000</div>
<div class="t" style="top:594px;line-height:17px;font-size:11px;color:#000;font-weight:bold;letter-spacing:0.56px;right:946.14px;">-3.000</div>
<div class="t" style="top:594px;line-height:17px;font-size:11px;color:#000;font-weight:bold;letter-spacing:0.56px;right:865.14px;">-3.000</div>
<div class="t" style="top:594px;line-height:17px;font-size:11px;color:#000;font-weight:bold;letter-spacing:0.56px;right:784.14px;">-3.000</div>
<div class="t" style="top:594px;line-height:17px;font-size:11px;color:#000;font-weight:bold;letter-spacing:0.56px;right:703.14px;">-3.000</div>
<div class="t" style="top:594px;line-height:17px;font-size:11px;color:#000;font-weight:bold;letter-spacing:0.56px;right:622.14px;">-3.000</div>
<div class="t" style="top:594px;line-height:17px;font-size:11px;color:#000;font-weight:bold;letter-spacing:0.56px;right:541.14px;">-3.000</div>
<div class="t" style="top:594px;line-height:17px;font-size:11px;color:#000;font-weight:bold;letter-spacing:0.56px;right:460.14px;">-3.000</div>
<div class="t" style="top:594px;line-height:17px;font-size:11px;color:#000;font-weight:bold;letter-spacing:0.56px;right:379.14px;">-3.000</div>
<div class="t" style="top:594px;line-height:17px;font-size:11px;color:#000;font-weight:bold;letter-spacing:0.56px;right:298.14px;">-3.000</div>
<div class="t" style="top:594px;line-height:17px;font-size:11px;color:#000;font-weight:bold;letter-spacing:0.56px;right:217.14px;">-3.000</div>
<div class="t" style="top:594px;line-height:17px;font-size:11px;color:#000;font-weight:bold;letter-spacing:0.56px;right:136.14px;">-3.000</div>
<div class="t" style="top:594px;line-height:17px;font-size:11px;color:#000;font-weight:bold;letter-spacing:0.56px;right:55.14px;">-3.060</div>
<div class="t" style="top:594px;line-height:17px;font-size:11px;color:#000;font-weight:bold;letter-spacing:0.56px;right:-25.86px;">-3.060</div>
<div class="t" style="top:594px;line-height:17px;font-size:11px;color:#4472C4;letter-spacing:0.62px;right:1176.88px;">3.000</div>
<div class="t" style="top:615px;line-height:17px;font-size:11px;color:#000;font-weight:bold;letter-spacing:0.07px;left:69px;">Gastos Operativos</div>
<div class="t" style="top:615px;line-height:17px;font-size:11px;color:#000;font-weight:bold;letter-spacing:0.56px;right:1027.14px;">-3.500</div>
<div class="t" style="top:615px;line-height:17px;font-size:11px;color:#000;font-weight:bold;letter-spacing:0.56px;right:946.14px;">-3.500</div>
<div class="t" style="top:615px;line-height:17px;font-size:11px;color:#000;font-weight:bold;letter-spacing:0.56px;right:865.14px;">-3.500</div>
<div class="t" style="top:615px;line-height:17px;font-size:11px;color:#000;font-weight:bold;letter-spacing:0.56px;right:784.14px;">-3.500</div>
<div class="t" style="top:615px;line-height:17px;font-size:11px;color:#000;font-weight:bold;letter-spacing:0.56px;right:703.14px;">-3.500</div>
<div class="t" style="top:615px;line-height:17px;font-size:11px;color:#000;font-weight:bold;letter-spacing:0.56px;right:622.14px;">-3.500</div>
<div class="t" style="top:615px;line-height:17px;font-size:11px;color:#000;font-weight:bold;letter-spacing:0.56px;right:541.14px;">-3.500</div>
<div class="t" style="top:615px;line-height:17px;font-size:11px;color:#000;font-weight:bold;letter-spacing:0.56px;right:460.14px;">-3.500</div>
<div class="t" style="top:615px;line-height:17px;font-size:11px;color:#000;font-weight:bold;letter-spacing:0.56px;right:379.14px;">-3.500</div>
<div class="t" style="top:615px;line-height:17px;font-size:11px;color:#000;font-weight:bold;letter-spacing:0.56px;right:298.14px;">-3.500</div>
<div class="t" style="top:615px;line-height:17px;font-size:11px;color:#000;font-weight:bold;letter-spacing:0.56px;right:217.14px;">-3.500</div>
<div class="t" style="top:615px;line-height:17px;font-size:11px;color:#000;font-weight:bold;letter-spacing:0.56px;right:136.14px;">-3.500</div>
<div class="t" style="top:615px;line-height:17px;font-size:11px;color:#000;font-weight:bold;letter-spacing:0.56px;right:55.14px;">-3.588</div>
<div class="t" style="top:615px;line-height:17px;font-size:11px;color:#000;font-weight:bold;letter-spacing:0.56px;right:-25.86px;">-3.588</div>
<div class="t" style="top:632px;line-height:17px;font-size:11px;color:#000;letter-spacing:0.77px;left:69px;">Alquileres</div>
<div class="t" style="top:632px;line-height:17px;font-size:11px;color:#000;letter-spacing:0.56px;right:1027.14px;">-2.000</div>
<div class="t" style="top:632px;line-height:17px;font-size:11px;color:#000;letter-spacing:0.56px;right:946.14px;">-2.000</div>
<div class="t" style="top:632px;line-height:17px;font-size:11px;color:#000;letter-spacing:0.56px;right:865.14px;">-2.000</div>
<div class="t" style="top:632px;line-height:17px;font-size:11px;color:#000;letter-spacing:0.56px;right:784.14px;">-2.000</div>
<div class="t" style="top:632px;line-height:17px;font-size:11px;color:#000;letter-spacing:0.56px;right:703.14px;">-2.000</div>
<div class="t" style="top:632px;line-height:17px;font-size:11px;color:#000;letter-spacing:0.56px;right:622.14px;">-2.000</div>
<div class="t" style="top:632px;line-height:17px;font-size:11px;color:#000;letter-spacing:0.56px;right:541.14px;">-2.000</div>
<div class="t" style="top:632px;line-height:17px;font-size:11px;color:#000;letter-spacing:0.56px;right:460.14px;">-2.000</div>
<div class="t" style="top:632px;line-height:17px;font-size:11px;color:#000;letter-spacing:0.56px;right:379.14px;">-2.000</div>
<div class="t" style="top:632px;line-height:17px;font-size:11px;color:#000;letter-spacing:0.56px;right:298.14px;">-2.000</div>
<div class="t" style="top:632px;line-height:17px;font-size:11px;color:#000;letter-spacing:0.56px;right:217.14px;">-2.000</div>
<div class="t" style="top:632px;line-height:17px;font-size:11px;color:#000;letter-spacing:0.56px;right:136.14px;">-2.000</div>
<div class="t" style="top:632px;line-height:17px;font-size:11px;color:#000;letter-spacing:0.56px;right:55.14px;">-2.050</div>
<div class="t" style="top:632px;line-height:17px;font-size:11px;color:#000;letter-spacing:0.56px;right:-25.86px;">-2.050</div>
<div class="t" style="top:632px;line-height:17px;font-size:11px;color:#4472C4;letter-spacing:0.62px;right:1176.88px;">2.000</div>
<div class="t" style="top:649px;line-height:17px;font-size:11px;color:#000;letter-spacing:0.58px;left:69px;">Reparaciones</div>
<div class="t" style="top:649px;line-height:17px;font-size:11px;color:#000;letter-spacing:0.69px;right:1027.01px;">-100</div>
<div class="t" style="top:649px;line-height:17px;font-size:11px;color:#000;letter-spacing:0.69px;right:946.01px;">-100</div>
<div class="t" style="top:649px;line-height:17px;font-size:11px;color:#000;letter-spacing:0.69px;right:865.01px;">-100</div>
<div class="t" style="top:649px;line-height:17px;font-size:11px;color:#000;letter-spacing:0.69px;right:784.01px;">-100</div>
<div class="t" style="top:649px;line-height:17px;font-size:11px;color:#000;letter-spacing:0.69px;right:703.01px;">-100</div>
<div class="t" style="top:649px;line-height:17px;font-size:11px;color:#000;letter-spacing:0.69px;right:622.01px;">-100</div>
<div class="t" style="top:649px;line-height:17px;font-size:11px;color:#000;letter-spacing:0.69px;right:541.01px;">-100</div>
<div class="t" style="top:649px;line-height:17px;font-size:11px;color:#000;letter-spacing:0.69px;right:460.01px;">-100</div>
<div class="t" style="top:649px;line-height:17px;font-size:11px;color:#000;letter-spacing:0.69px;right:379.01px;">-100</div>
<div class="t" style="top:649px;line-height:17px;font-size:11px;color:#000;letter-spacing:0.69px;right:298.01px;">-100</div>
<div class="t" style="top:649px;line-height:17px;font-size:11px;color:#000;letter-spacing:0.69px;right:217.01px;">-100</div>
<div class="t" style="top:649px;line-height:17px;font-size:11px;color:#000;letter-spacing:0.69px;right:136.01px;">-100</div>
<div class="t" style="top:649px;line-height:17px;font-size:11px;color:#000;letter-spacing:0.69px;right:55.01px;">-103</div>
<div class="t" style="top:649px;line-height:17px;font-size:11px;color:#000;letter-spacing:0.69px;right:-25.99px;">-103</div>
<div class="t" style="top:649px;line-height:17px;font-size:11px;color:#4472C4;letter-spacing:0.87px;right:1176.63px;">100</div>
<div class="t" style="top:666px;line-height:17px;font-size:11px;color:#000;letter-spacing:0.69px;left:69px;">Servicios profesionales</div>
<div class="t" style="top:666px;line-height:17px;font-size:11px;color:#000;letter-spacing:0.69px;right:1027.01px;">-200</div>
<div class="t" style="top:666px;line-height:17px;font-size:11px;color:#000;letter-spacing:0.69px;right:946.01px;">-200</div>
<div class="t" style="top:666px;line-height:17px;font-size:11px;color:#000;letter-spacing:0.69px;right:865.01px;">-200</div>
<div class="t" style="top:666px;line-height:17px;font-size:11px;color:#000;letter-spacing:0.69px;right:784.01px;">-200</div>
<div class="t" style="top:666px;line-height:17px;font-size:11px;color:#000;letter-spacing:0.69px;right:703.01px;">-200</div>
<div class="t" style="top:666px;line-height:17px;font-size:11px;color:#000;letter-spacing:0.69px;right:622.01px;">-200</div>
<div class="t" style="top:666px;line-height:17px;font-size:11px;color:#000;letter-spacing:0.69px;right:541.01px;">-200</div>
<div class="t" style="top:666px;line-height:17px;font-size:11px;color:#000;letter-spacing:0.69px;right:460.01px;">-200</div>
<div class="t" style="top:666px;line-height:17px;font-size:11px;color:#000;letter-spacing:0.69px;right:379.01px;">-200</div>
<div class="t" style="top:666px;line-height:17px;font-size:11px;color:#000;letter-spacing:0.69px;right:298.01px;">-200</div>
<div class="t" style="top:666px;line-height:17px;font-size:11px;color:#000;letter-spacing:0.69px;right:217.01px;">-200</div>
<div class="t" style="top:666px;line-height:17px;font-size:11px;color:#000;letter-spacing:0.69px;right:136.01px;">-200</div>
<div class="t" style="top:666px;line-height:17px;font-size:11px;color:#000;letter-spacing:0.69px;right:55.01px;">-205</div>
<div class="t" style="top:666px;line-height:17px;font-size:11px;color:#000;letter-spacing:0.69px;right:-25.99px;">-205</div>
<div class="t" style="top:666px;line-height:17px;font-size:11px;color:#4472C4;letter-spacing:0.87px;right:1176.63px;">200</div>
<div class="t" style="top:683px;line-height:17px;font-size:11px;color:#000;letter-spacing:0.65px;left:69px;">Transportes</div>
<div class="t" style="top:683px;line-height:17px;font-size:11px;color:#000;letter-spacing:0.69px;right:1027.01px;">-200</div>
<div class="t" style="top:683px;line-height:17px;font-size:11px;color:#000;letter-spacing:0.69px;right:946.01px;">-200</div>
<div class="t" style="top:683px;line-height:17px;font-size:11px;color:#000;letter-spacing:0.69px;right:865.01px;">-200</div>
<div class="t" style="top:683px;line-height:17px;font-size:11px;color:#000;letter-spacing:0.69px;right:784.01px;">-200</div>
<div class="t" style="top:683px;line-height:17px;font-size:11px;color:#000;letter-spacing:0.69px;right:703.01px;">-200</div>
<div class="t" style="top:683px;line-height:17px;font-size:11px;color:#000;letter-spacing:0.69px;right:622.01px;">-200</div>
<div class="t" style="top:683px;line-height:17px;font-size:11px;color:#000;letter-spacing:0.69px;right:541.01px;">-200</div>
<div class="t" style="top:683px;line-height:17px;font-size:11px;color:#000;letter-spacing:0.69px;right:460.01px;">-200</div>
<div class="t" style="top:683px;line-height:17px;font-size:11px;color:#000;letter-spacing:0.69px;right:379.01px;">-200</div>
<div class="t" style="top:683px;line-height:17px;font-size:11px;color:#000;letter-spacing:0.69px;right:298.01px;">-200</div>
<div class="t" style="top:683px;line-height:17px;font-size:11px;color:#000;letter-spacing:0.69px;right:217.01px;">-200</div>
<div class="t" style="top:683px;line-height:17px;font-size:11px;color:#000;letter-spacing:0.69px;right:136.01px;">-200</div>
<div class="t" style="top:683px;line-height:17px;font-size:11px;color:#000;letter-spacing:0.69px;right:55.01px;">-205</div>
<div class="t" style="top:683px;line-height:17px;font-size:11px;color:#000;letter-spacing:0.69px;right:-25.99px;">-205</div>
<div class="t" style="top:683px;line-height:17px;font-size:11px;color:#4472C4;letter-spacing:0.87px;right:1176.63px;">200</div>
<div class="t" style="top:700px;line-height:17px;font-size:11px;color:#000;letter-spacing:0.25px;left:69px;">Seguros</div>
<div class="t" style="top:700px;line-height:17px;font-size:11px;color:#000;letter-spacing:0.69px;right:1027.01px;">-200</div>
<div class="t" style="top:700px;line-height:17px;font-size:11px;color:#000;letter-spacing:0.69px;right:946.01px;">-200</div>
<div class="t" style="top:700px;line-height:17px;font-size:11px;color:#000;letter-spacing:0.69px;right:865.01px;">-200</div>
<div class="t" style="top:700px;line-height:17px;font-size:11px;color:#000;letter-spacing:0.69px;right:784.01px;">-200</div>
<div class="t" style="top:700px;line-height:17px;font-size:11px;color:#000;letter-spacing:0.69px;right:703.01px;">-200</div>
<div class="t" style="top:700px;line-height:17px;font-size:11px;color:#000;letter-spacing:0.69px;right:622.01px;">-200</div>
<div class="t" style="top:700px;line-height:17px;font-size:11px;color:#000;letter-spacing:0.69px;right:541.01px;">-200</div>
<div class="t" style="top:700px;line-height:17px;font-size:11px;color:#000;letter-spacing:0.69px;right:460.01px;">-200</div>
<div class="t" style="top:700px;line-height:17px;font-size:11px;color:#000;letter-spacing:0.69px;right:379.01px;">-200</div>
<div class="t" style="top:700px;line-height:17px;font-size:11px;color:#000;letter-spacing:0.69px;right:298.01px;">-200</div>
<div class="t" style="top:700px;line-height:17px;font-size:11px;color:#000;letter-spacing:0.69px;right:217.01px;">-200</div>
<div class="t" style="top:700px;line-height:17px;font-size:11px;color:#000;letter-spacing:0.69px;right:136.01px;">-200</div>
<div class="t" style="top:700px;line-height:17px;font-size:11px;color:#000;letter-spacing:0.69px;right:55.01px;">-205</div>
<div class="t" style="top:700px;line-height:17px;font-size:11px;color:#000;letter-spacing:0.69px;right:-25.99px;">-205</div>
<div class="t" style="top:700px;line-height:17px;font-size:11px;color:#4472C4;letter-spacing:0.87px;right:1176.63px;">200</div>
<div class="t" style="top:717px;line-height:17px;font-size:11px;color:#000;letter-spacing:0.71px;left:69px;">Servicios bancarios</div>
<div class="t" style="top:717px;line-height:17px;font-size:11px;color:#000;letter-spacing:0.69px;right:1027.01px;">-200</div>
<div class="t" style="top:717px;line-height:17px;font-size:11px;color:#000;letter-spacing:0.69px;right:946.01px;">-200</div>
<div class="t" style="top:717px;line-height:17px;font-size:11px;color:#000;letter-spacing:0.69px;right:865.01px;">-200</div>
<div class="t" style="top:717px;line-height:17px;font-size:11px;color:#000;letter-spacing:0.69px;right:784.01px;">-200</div>
<div class="t" style="top:717px;line-height:17px;font-size:11px;color:#000;letter-spacing:0.69px;right:703.01px;">-200</div>
<div class="t" style="top:717px;line-height:17px;font-size:11px;color:#000;letter-spacing:0.69px;right:622.01px;">-200</div>
<div class="t" style="top:717px;line-height:17px;font-size:11px;color:#000;letter-spacing:0.69px;right:541.01px;">-200</div>
<div class="t" style="top:717px;line-height:17px;font-size:11px;color:#000;letter-spacing:0.69px;right:460.01px;">-200</div>
<div class="t" style="top:717px;line-height:17px;font-size:11px;color:#000;letter-spacing:0.69px;right:379.01px;">-200</div>
<div class="t" style="top:717px;line-height:17px;font-size:11px;color:#000;letter-spacing:0.69px;right:298.01px;">-200</div>
<div class="t" style="top:717px;line-height:17px;font-size:11px;color:#000;letter-spacing:0.69px;right:217.01px;">-200</div>
<div class="t" style="top:717px;line-height:17px;font-size:11px;color:#000;letter-spacing:0.69px;right:136.01px;">-200</div>
<div class="t" style="top:717px;line-height:17px;font-size:11px;color:#000;letter-spacing:0.69px;right:55.01px;">-205</div>
<div class="t" style="top:717px;line-height:17px;font-size:11px;color:#000;letter-spacing:0.69px;right:-25.99px;">-205</div>
<div class="t" style="top:717px;line-height:17px;font-size:11px;color:#4472C4;letter-spacing:0.87px;right:1176.63px;">200</div>
<div class="r" style="left:1081px;top:28px;width:203px;height:49px;background:#FBF9FA"></div>
<svg class="r" style="left:1081px;top:28px" width="203" height="49" viewBox="1081 28 203 49">
<circle cx="1089.8" cy="68.5" r="5.3" fill="#28418A"/>
<rect x="1126.8" y="31.3" width="10.3" height="42.6" fill="#28418A"/>
<polygon points="1095.8,73.9 1110.6,73.9 1126.3,57.2 1119.4,49.8" fill="#28418A"/>
</svg>
<div class="t" style="top:35px;line-height:24px;font-size:16px;color:#28418A;font-weight:bold;left:1143.8px;transform:scaleX(1.141);transform-origin:0 0;">KEA ADVISORY</div>
<div class="t" style="top:53px;line-height:16px;font-size:9.2px;color:#7F7F7F;left:1144.8px;transform:scaleX(1.117);transform-origin:0 0;">Empowering business</div>
</div>
<div class="r" style="left:0px;top:0px;width:1528px;height:20px;background:#E6E6E6;"></div>
<div class="r" style="left:0px;top:20px;width:1528px;height:1px;background:#9B9B9B;"></div>
<div class="t ch" style="left:13.5px;width:40px;top:3px;">A</div>
<div class="r" style="left:66px;top:4px;width:1px;height:16px;background:#9B9B9B;"></div>
<div class="t ch" style="left:50.5px;width:40px;top:3px;">B</div>
<div class="r" style="left:74px;top:4px;width:1px;height:16px;background:#BDBDBD;"></div>
<div class="t ch" style="left:158.5px;width:40px;top:3px;">C</div>
<div class="r" style="left:282px;top:4px;width:1px;height:16px;background:#BDBDBD;"></div>
<div class="t ch" style="left:298.0px;width:40px;top:3px;">D</div>
<div class="r" style="left:353px;top:4px;width:1px;height:16px;background:#BDBDBD;"></div>
<div class="t ch" style="left:368.0px;width:40px;top:3px;">E</div>
<div class="r" style="left:422px;top:4px;width:1px;height:16px;background:#BDBDBD;"></div>
<div class="t ch" style="left:443.0px;width:40px;top:3px;">F</div>
<div class="r" style="left:503px;top:4px;width:1px;height:16px;background:#BDBDBD;"></div>
<div class="t ch" style="left:524.0px;width:40px;top:3px;">G</div>
<div class="r" style="left:584px;top:4px;width:1px;height:16px;background:#BDBDBD;"></div>
<div class="t ch" style="left:605.0px;width:40px;top:3px;">H</div>
<div class="r" style="left:665px;top:4px;width:1px;height:16px;background:#BDBDBD;"></div>
<div class="t ch" style="left:686.0px;width:40px;top:3px;">I</div>
<div class="r" style="left:746px;top:4px;width:1px;height:16px;background:#BDBDBD;"></div>
<div class="t ch" style="left:767.0px;width:40px;top:3px;">J</div>
<div class="r" style="left:827px;top:4px;width:1px;height:16px;background:#BDBDBD;"></div>
<div class="t ch" style="left:848.0px;width:40px;top:3px;">K</div>
<div class="r" style="left:908px;top:4px;width:1px;height:16px;background:#BDBDBD;"></div>
<div class="t ch" style="left:929.0px;width:40px;top:3px;">L</div>
<div class="r" style="left:989px;top:4px;width:1px;height:16px;background:#BDBDBD;"></div>
<div class="t ch" style="left:1010.0px;width:40px;top:3px;">M</div>
<div class="r" style="left:1070px;top:4px;width:1px;height:16px;background:#BDBDBD;"></div>
<div class="t ch" style="left:1091.0px;width:40px;top:3px;">N</div>
<div class="r" style="left:1151px;top:4px;width:1px;height:16px;background:#BDBDBD;"></div>
<div class="t ch" style="left:1172.0px;width:40px;top:3px;">O</div>
<div class="r" style="left:1232px;top:4px;width:1px;height:16px;background:#BDBDBD;"></div>
<div class="t ch" style="left:1253.0px;width:40px;top:3px;">P</div>
<div class="r" style="left:1313px;top:4px;width:1px;height:16px;background:#BDBDBD;"></div>
<div class="t ch" style="left:1334.0px;width:40px;top:3px;">Q</div>
<div class="r" style="left:1394px;top:4px;width:1px;height:16px;background:#BDBDBD;"></div>
<div class="t ch" style="left:1415.0px;width:40px;top:3px;">R</div>
<div class="r" style="left:1475px;top:4px;width:1px;height:16px;background:#BDBDBD;"></div>
<div class="t ch" style="left:1496.0px;width:40px;top:3px;">S</div>
<div class="r" style="left:74px;top:4px;width:1px;height:16px;background:#9B9B9B;"></div>
<div class="r" style="left:0px;top:726px;width:1528px;height:29px;background:#E6E6E6;"></div>
<div class="r" style="left:0px;top:725px;width:762px;height:1px;background:#A0A0A0;"></div>
<div class="r" style="left:1025px;top:725px;width:503px;height:1px;background:#A0A0A0;"></div>
<svg class="r" style="left:0;top:726px" width="85" height="29"><polygon points="2,15 7.4,10 7.4,20" fill="#C3C3C3"/><polygon points="34,9.5 39.5,15 34,20.5" fill="#1E6B41"/></svg>
<div class="r" style="left:84px;top:729px;width:1px;height:25px;background:#9D9D9D;"></div>
<div class="r" style="left:87px;top:728px;width:106px;height:26px;background:#A6A6A6;"></div>
<div class="t" style="top:727px;line-height:25px;font-size:17px;color:#1a1a1a;letter-spacing:-0.02px;left:97.9px;">Dashboard</div>
<div class="r" style="left:195px;top:729px;width:1px;height:25px;background:#9D9D9D;"></div>
<div class="r" style="left:198px;top:728px;width:239.5px;height:26px;background:#B4C6E7;"></div>
<div class="t" style="top:727px;line-height:25px;font-size:17px;color:#1a1a1a;letter-spacing:-0.33px;left:211.6px;">Pérdidas y Ganancias_Anual</div>
<div class="r" style="left:439px;top:729px;width:1px;height:25px;background:#9D9D9D;"></div>
<div class="r" style="left:441.5px;top:728px;width:134.0px;height:26px;background:#B4C6E7;"></div>
<div class="t" style="top:727px;line-height:25px;font-size:17px;color:#1a1a1a;letter-spacing:-0.46px;left:453.4px;">Balance_Anual</div>
<div class="r" style="left:577px;top:729px;width:1px;height:25px;background:#9D9D9D;"></div>
<div class="r" style="left:580px;top:728px;width:179.5px;height:26px;background:#B4C6E7;"></div>
<div class="t" style="top:727px;line-height:25px;font-size:17px;color:#1a1a1a;letter-spacing:-0.32px;left:592.1px;">Flujos de caja_Anual</div>
<div class="r" style="left:761px;top:725px;width:265px;height:28px;background:#fff;border-left:1px solid #A0A0A0;border-right:1px solid #A0A0A0;box-sizing:border-box;background:linear-gradient(#fff 60%,#EAF2EA);"></div>
<div class="r" style="left:761px;top:752px;width:265px;height:2px;background:#217346;"></div>
<div class="t" style="top:727px;line-height:25px;font-size:17px;color:#217346;font-weight:bold;letter-spacing:-0.53px;left:773.2px;">Pérdidas y Ganancias_Mensual</div>
<div class="r" style="left:1027.5px;top:728px;width:16.5px;height:26px;background:#C6E0B4;"></div>
<div class="r" style="left:1027.5px;top:728px;width:16.5px;height:26px;overflow:hidden"><div class="t" style="left:12px;top:0;font-size:17px;line-height:25px;color:#1a1a1a">E</div></div>
<div class="r" style="left:1054px;top:742.8px;width:2.2px;height:2.2px;background:#14532B;"></div>
<div class="r" style="left:1059.2px;top:742.8px;width:2.2px;height:2.2px;background:#14532B;"></div>
<div class="r" style="left:1064.3px;top:742.8px;width:2.2px;height:2.2px;background:#14532B;"></div>
<svg class="r" style="left:1080px;top:729px" width="24" height="24"><circle cx="11.9" cy="12.8" r="9.6" fill="none" stroke="#707070" stroke-width="1.1"/><path d="M11.9 7.8v10M6.9 12.8h10" stroke="#6A6A6A" stroke-width="1.6"/></svg>
<div class="r" style="left:1122px;top:735px;width:3px;height:3px;background:#C2C2C2;"></div>
<div class="r" style="left:1122px;top:740px;width:3px;height:3px;background:#C2C2C2;"></div>
<div class="r" style="left:1122px;top:745px;width:3px;height:3px;background:#C2C2C2;"></div>
<div class="r" style="left:1142px;top:732px;width:386px;height:19px;background:#F0F0F0;"></div>
<div class="r" style="left:1142px;top:732px;width:19px;height:19px;background:#fff;border:1px solid #ABABAB;box-sizing:border-box;"></div>
<svg class="r" style="left:1142px;top:732px" width="19" height="19"><polygon points="6,9.5 11.5,5 11.5,14" fill="#222"/></svg>
<div class="r" style="left:1160px;top:732px;width:244px;height:19px;background:#fff;border:1px solid #ABABAB;box-sizing:border-box;"></div>
<div class="t" style="top:680px;line-height:30px;font-size:23.8px;color:rgba(120,120,120,0.42);left:1484.6px;">Activar Windows</div>
<div class="t" style="top:712px;line-height:24px;font-size:17.6px;color:rgba(120,120,120,0.40);left:1485px;">Ve a Configuración</div>
</body></html>
